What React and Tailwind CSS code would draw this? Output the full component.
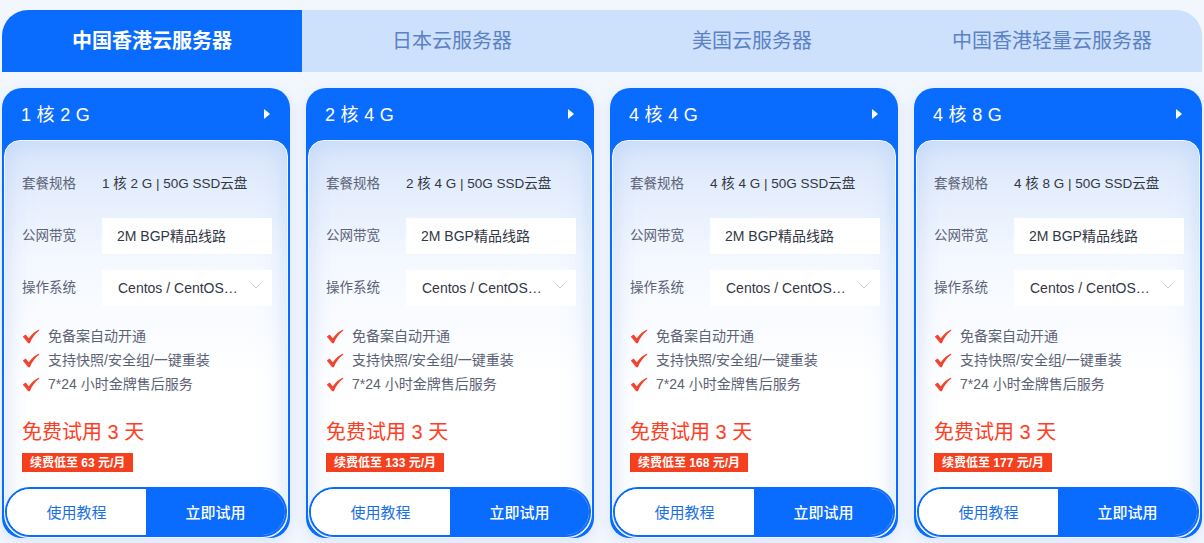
import React from "react";

const tabs = ["中国香港云服务器", "日本云服务器", "美国云服务器", "中国香港轻量云服务器"];

const plans = [
  { cpu: "1", ram: "2", price: "63" },
  { cpu: "2", ram: "4", price: "133" },
  { cpu: "4", ram: "4", price: "168" },
  { cpu: "4", ram: "8", price: "177" },
];

const perks = ["免备案自动开通", "支持快照/安全组/一键重装", "7*24 小时金牌售后服务"];

// brush style red tick
function Check() {
  return (
    <svg width="18" height="15" viewBox="0 0 18 15" className="shrink-0">
      <path
        d="M0.8 7.6 L3.6 5.6 L6.8 9.2 C9.2 5.6 12.6 2.6 17 0.4 L17.4 1.6 C13.6 4.4 10.4 8.4 7.8 14.2 L6.2 14.2 Z"
        fill="#f2452f"
      />
    </svg>
  );
}

function PlanCard({ cpu, ram, price }) {
  return (
    <div className="w-[288px] h-[450px] shrink-0 rounded-[20px] bg-[#0a6cff] flex flex-col px-[2px] shadow-[0_4px_14px_rgba(30,110,240,0.12)]">
      {/* header */}
      <div className="h-[52px] flex items-center justify-between pt-[3px] pl-[17px] pr-[18px] text-white text-[18px] tracking-[0.3px]">
        <span>
          {cpu} 核 {ram} G
        </span>
        <svg width="6" height="10" viewBox="0 0 6 10" className="-mt-[3px]">
          <path d="M0 0 L6 5 L0 10 Z" fill="#fff" />
        </svg>
      </div>

      {/* body */}
      <div className="flex-1 flex flex-col rounded-t-[16px] rounded-b-[24px] border border-[#f4f8ff] bg-[linear-gradient(180deg,#d9e6fb_0%,#f4f8ff_30%,#ffffff_60%)] shadow-[inset_0_0_26px_rgba(170,200,245,0.55)]">
        <div className="pt-[25px] pl-[17px] pr-[15px] flex flex-col gap-[16px]">
          <div className="h-[36px] flex items-center">
            <span className="w-[80px] text-[13.5px] text-[#5c6275]">套餐规格</span>
            <span className="text-[13.5px] text-[#333744]">
              {cpu} 核 {ram} G | 50G SSD云盘
            </span>
          </div>
          <div className="h-[36px] flex items-center">
            <span className="w-[80px] text-[13.5px] text-[#5c6275]">公网带宽</span>
            <div className="flex-1 h-[36px] bg-white flex items-center pl-[15px] text-[14px] text-[#333744]">
              2M BGP精品线路
            </div>
          </div>
          <div className="h-[36px] flex items-center">
            <span className="w-[80px] text-[13.5px] text-[#5c6275]">操作系统</span>
            <div className="flex-1 h-[36px] bg-white flex items-center pl-[16px] pr-[10px] text-[14px] text-[#333744]">
              <span>Centos / CentOS…</span>
              <svg width="12" height="7" viewBox="0 0 12 7" className="ml-auto mb-[6px]">
                <path d="M0.5 0.5 L6 6 L11.5 0.5" fill="none" stroke="#c8ccd4" strokeWidth="1" />
              </svg>
            </div>
          </div>
        </div>

        <div className="mt-[18px] pl-[17px] flex flex-col text-[14px] text-[#5c6275]">
          {perks.map((p) => (
            <div key={p} className="h-[24px] flex items-center gap-[8px]">
              <Check />
              <span>{p}</span>
            </div>
          ))}
        </div>

        <div className="mt-[22px] pl-[17px] text-[20px] leading-[28px] text-[#ff3d1f]">免费试用 3 天</div>
        <div className="mt-[7px] ml-[17px] self-start h-[19px] px-[8px] bg-[#f5401f] text-white text-[12px] font-bold flex items-center">
          续费低至 {price} 元/月
        </div>

        <div className="mt-auto h-[50px] flex rounded-[25px] border-2 border-[#0a6cff] overflow-hidden text-[15px]">
          <div className="w-[139px] bg-white flex items-center justify-center pt-[3px] text-[#1a6fe8]">使用教程</div>
          <div className="flex-1 bg-[#0a6cff] flex items-center justify-center pt-[3px] text-white font-medium">立即试用</div>
        </div>
      </div>
    </div>
  );
}

export default function App() {
  return (
    <div
      className="w-[1204px] h-[543px] overflow-hidden bg-[#f2f7fe] pt-[10px] px-[2px]"
      style={{ fontFamily: '"Liberation Sans", "Noto Sans CJK SC", sans-serif' }}
    >
      <div className="flex h-[62px]">
        {tabs.map((t, i) => (
          <div
            key={t}
            className={
              i === 0
                ? "w-[300px] flex items-center justify-center rounded-tl-[26px] bg-[#0a6cff] text-white text-[20px] font-bold"
                : i === 3
                ? "w-[300px] flex items-center justify-center rounded-tr-[26px] bg-[#cde0fc] text-[#5b82c5] text-[20px]"
                : "w-[300px] flex items-center justify-center bg-[#cde0fc] text-[#5b82c5] text-[20px]"
            }
          >
            {t}
          </div>
        ))}
      </div>

      <div className="mt-[16px] flex gap-[16px]">
        {plans.map((p) => (
          <PlanCard key={p.cpu + p.ram} {...p} />
        ))}
      </div>
    </div>
  );
}
